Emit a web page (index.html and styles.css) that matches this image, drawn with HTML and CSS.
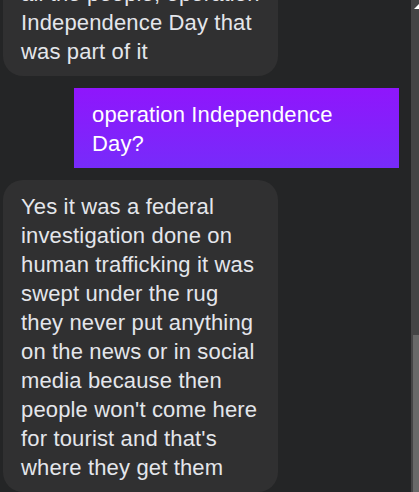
FILE: index.html
```html
<!DOCTYPE html>
<html lang="en">
<head>
<meta charset="utf-8">
<title>Chat</title>
<link rel="stylesheet" href="styles.css">
</head>
<body>
<div class="app">
  <main class="chat">
    <div class="msg msg-in">all the people, operation Independence Day that was part of it</div>
    <div class="msg msg-out">operation Independence Day?</div>
    <div class="msg msg-in">Yes it was a federal investigation done on human trafficking it was swept under the rug they never put anything on the news or in social media because then people won't come here for tourist and that's where they get them</div>
  </main>
  <div class="scrollbar">
    <svg class="scroll-arrow" width="8" height="12" viewBox="0 0 8 12"><polygon points="3,9 8,9 8,4" fill="#ffffff"/></svg>
    <div class="scroll-thumb"></div>
  </div>
</div>
</body>
</html>
```

FILE: styles.css
```css
html, body {
  margin: 0;
  padding: 0;
  height: 100%;
  background: #242526;
  overflow: hidden;
}

.app {
  display: flex;
  height: 492px;
}

.chat {
  flex: 1;
  display: flex;
  flex-direction: column;
  justify-content: flex-end;
  gap: 12px;
  overflow: hidden;
  font-family: "Liberation Sans", Arial, sans-serif;
  font-size: 22px;
  line-height: 29px;
  letter-spacing: 0.15px;
}

.msg {
  box-sizing: border-box;
  padding: 12px 18px 10px;
  flex-shrink: 0;
}

.msg-in {
  align-self: flex-start;
  margin-left: 3px;
  max-width: 275px;
  background: #303031;
  color: #e4e6eb;
  border-radius: 20px;
}

.msg-out {
  align-self: flex-end;
  margin-right: 12px;
  max-width: 325px;
  width: 325px;
  background: linear-gradient(180deg, #8f16fc 0%, #772bfa 100%);
  color: #ffffff;
}

.scrollbar {
  width: 8px;
  background: #444445;
  display: flex;
  flex-direction: column;
}

.scroll-arrow {
  display: block;
}

.scroll-thumb {
  margin-top: auto;
  margin-left: 2px;
  width: 6px;
  height: 157px;
  background: #686868;
}
```
